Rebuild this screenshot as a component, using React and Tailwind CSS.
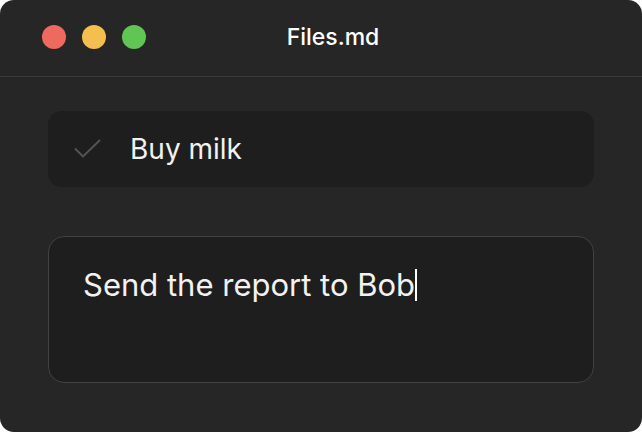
export default function App() {
  return (
    <div className="w-[642px] h-[432px] bg-white" style={{ fontFamily: "Inter, 'Noto Sans', sans-serif" }}>
      <div className="w-full h-full rounded-[14px] bg-[#262626] overflow-hidden flex flex-col">
        <div className="relative h-[77px] shrink-0 border-b border-[#3b3b3b] flex items-center px-[42px] pb-[2px]">
          <div className="flex gap-[16px]">
            <span className="w-[24px] h-[24px] rounded-full bg-[#ee6a5f]" />
            <span className="w-[24px] h-[24px] rounded-full bg-[#f5bf4f]" />
            <span className="w-[24px] h-[24px] rounded-full bg-[#61c554]" />
          </div>
          <div className="absolute inset-0 flex items-center justify-center pl-[24px] pb-[2px] text-[23px] font-medium text-white">
            Files.md
          </div>
        </div>
        <div className="flex flex-col gap-[49px] px-[48px] pt-[34px]">
          <div className="h-[76px] rounded-[14px] bg-[#1e1e1e] flex items-center pl-[25px] gap-[29px]">
            <svg width="28" height="20" viewBox="0 0 28 20" fill="none">
              <path d="M2 9.5 L10 17.5 L27 1" stroke="#555555" strokeWidth="1.8" />
            </svg>
            <span className="text-[28px] text-[#f2f2f2]">Buy milk</span>
          </div>
          <div className="h-[147px] rounded-[16px] bg-[#1e1e1e] border-[1.5px] border-[#424242] px-[34px] pt-[30px]">
            <div className="flex items-center text-[31px] text-[#f2f2f2] leading-[36px]">
              Send the report to Bob
              <span className="inline-block w-[2px] h-[32px] bg-white" />
            </div>
          </div>
        </div>
      </div>
    </div>
  );
}
